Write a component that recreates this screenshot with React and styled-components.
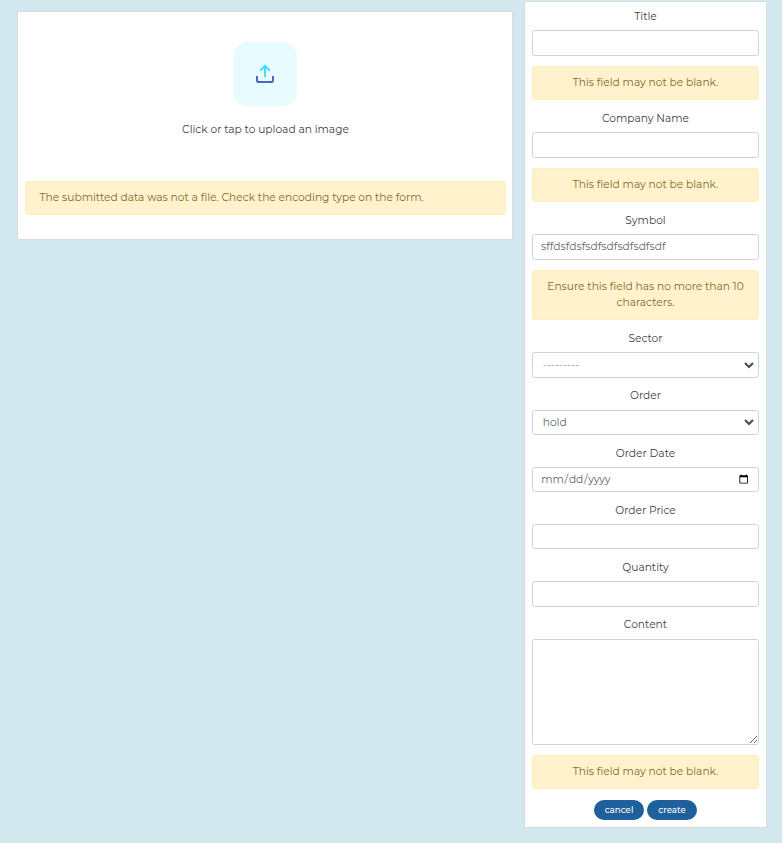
import React from "react";
import styled, { createGlobalStyle } from "styled-components";

const GlobalStyle = createGlobalStyle`
  * { box-sizing: border-box; }
  body {
    margin: 0;
    min-height: 843px;
    overflow: hidden;
    background: #d2e7ee;
    color: #3e4247;
    font-family: Montserrat, Inter, sans-serif;
    font-size: 10.67px;
    line-height: 16px;
  }
  input, select, textarea, button { font: inherit; }
`;

const Page = styled.main`
  display: flex;
  align-items: flex-start;
  gap: 11px;
  padding: 1px 15px 0 17px;
`;

const Panel = styled.section`
  background: #fff;
  border: 1px solid #d8dade;
`;

const UploadPanel = styled(Panel)`
  width: 496px;
  height: 229px;
  margin-top: 10px;
  padding: 30px 6px 0 7px;
`;

const FormPanel = styled(Panel)`
  width: 243px;
  height: 827px;
  padding: 6.92px 7px 0;
`;

const UploadArea = styled.label`
  display: flex;
  flex-direction: column;
  align-items: center;
  gap: 16px;
  height: 139px;
`;

const UploadTile = styled.span`
  display: grid;
  place-items: center;
  width: 64px;
  height: 64px;
  margin-right: 1px;
  border-radius: 14px;
  background: #e8fbff;
`;

const Field = styled.div`
  display: flex;
  flex-direction: column;
  margin-bottom: ${(p) => (p.$tight ? 10.35 : 10.67)}px;
`;

const Label = styled.label`
  height: 16px;
  margin-bottom: 5.33px;
  text-align: center;
  white-space: nowrap;
`;

const controlStyles = `
  display: block;
  width: 100%;
  height: 25.33px;
  margin: 0;
  padding: 3px 8px;
  border: 1px solid #ced4da;
  border-radius: 2.67px;
  background: #fff;
  color: #5f666e;
  outline: none;
`;

const Input = styled.input`
  ${controlStyles}
  &[type="date"] {
    padding-left: 7.3px;
    letter-spacing: -0.2px;
  }
  &::-webkit-calendar-picker-indicator {
    width: 10.67px;
    height: 10.67px;
    margin: 0 1px 0 0;
    padding: 0;
  }
`;

const Select = styled.select`
  ${controlStyles}
  appearance: none;
  padding: ${(p) => (p.$empty ? 1 : 0.6)}px 9.7px 0;
  color: ${(p) => (p.$empty ? "#9da1a5" : "#5f666e")};
`;

const SelectBox = styled.div`
  position: relative;
`;

const Chevron = styled.svg`
  position: absolute;
  right: 5px;
  top: 8.4px;
  width: 10px;
  height: 8px;
  pointer-events: none;
`;

const TextArea = styled.textarea`
  ${controlStyles}
  height: 105.8px;
  resize: vertical;
`;

const Alert = styled.div`
  margin-bottom: ${(p) => (p.$multiline ? 10.99 : 10.67)}px;
  padding: 8px 13.5px;
  border: 1px solid #ffeeba;
  border-radius: 2.67px;
  background: #fff2cd;
  color: #856a2c;
  text-align: ${(p) => p.$align || "center"};
`;

const Actions = styled.div`
  display: flex;
  justify-content: center;
  gap: 3px;
`;

const Button = styled.button`
  width: 50px;
  height: 20px;
  padding: 0;
  border: 0;
  border-radius: 10px;
  background: #1d609c;
  color: #fff;
  font-size: 8.7px;
  font-weight: 500;
  line-height: 20px;
`;

function UploadIcon() {
  return (
    <svg width="20" height="20" viewBox="0 0 20 20" fill="none" strokeWidth="2">
      <path d="M10 13V2M5.3 6.5 10 2l4.7 4.5" stroke="#43dcfa" />
      <path d="M2 12v4.2c0 1.2.6 1.8 1.8 1.8h12.4c1.2 0 1.8-.6 1.8-1.8V12" stroke="#4b66c2" />
    </svg>
  );
}

function SelectField({ label, option, empty }) {
  return (
    <Field>
      <Label>{label}</Label>
      <SelectBox>
        <Select $empty={empty} aria-label={label}>
          <option>{option}</option>
        </Select>
        <Chevron viewBox="0 0 10 8" fill="none">
          <path d="M1 2 5 6l4-4" stroke="#494e56" strokeWidth="2.2" />
        </Chevron>
      </SelectBox>
    </Field>
  );
}

function TextField({ label, tight, ...rest }) {
  return (
    <Field $tight={tight}>
      <Label>{label}</Label>
      <Input aria-label={label} {...rest} />
    </Field>
  );
}

function BlankError() {
  return <Alert>This field may not be blank.</Alert>;
}

export default function App() {
  return (
    <>
      <GlobalStyle />
      <Page>
        <UploadPanel>
          <UploadArea>
            <UploadTile><UploadIcon /></UploadTile>
            <span>Click or tap to upload an image</span>
          </UploadArea>
          <Alert $align="left">
            The submitted data was not a file. Check the encoding type on the form.
          </Alert>
        </UploadPanel>
        <FormPanel>
          <TextField label="Title" />
          <BlankError />
          <TextField label="Company Name" />
          <BlankError />
          <TextField label="Symbol" defaultValue="sffdsfdsfsdfsdfsdfsdfsdf" />
          <Alert $multiline>Ensure this field has no more than 10 characters.</Alert>
          <SelectField label="Sector" option="---------" empty />
          <SelectField label="Order" option="hold" />
          <TextField label="Order Date" type="date" tight />
          <TextField label="Order Price" />
          <TextField label="Quantity" />
          <Field>
            <Label>Content</Label>
            <TextArea aria-label="Content" />
          </Field>
          <BlankError />
          <Actions>
            <Button type="button">cancel</Button>
            <Button type="button">create</Button>
          </Actions>
        </FormPanel>
      </Page>
    </>
  );
}
